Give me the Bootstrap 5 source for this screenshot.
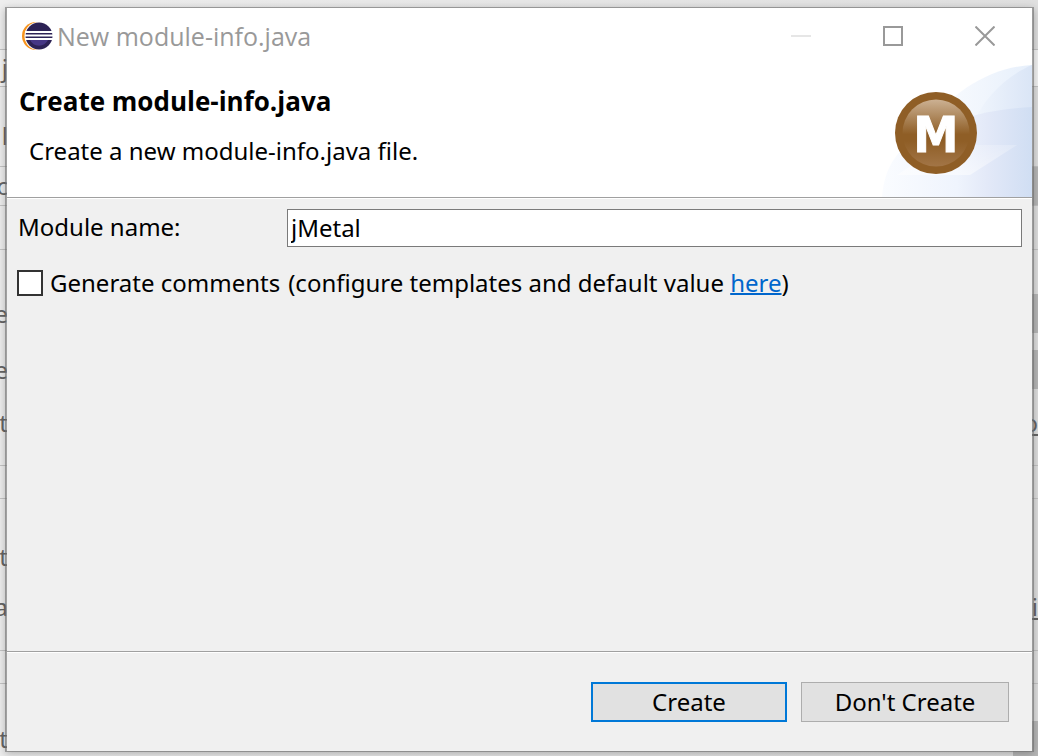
<!DOCTYPE html>
<html lang="en">
<head>
<meta charset="utf-8">
<meta name="viewport" content="width=device-width, initial-scale=1">
<title>New module-info.java</title>
<link href="https://cdn.jsdelivr.net/npm/bootstrap@5.3.0/dist/css/bootstrap.min.css" rel="stylesheet">
<style>
  body { font-family: "Noto Sans", "Open Sans", sans-serif; font-size: 24px; line-height: 32px; color: #000; background: #e1e1e1; }
  /* window behind the dialog */
  .backdrop-window { background: linear-gradient(90deg, #eee, #e0e0e0); }
  .strip { flex: none; line-height: 32px; color: #666; white-space: nowrap; overflow: hidden; }
  .h10 { height: 10px; } .h17 { height: 17px; } .h19 { height: 19px; } .h33 { height: 33px; } .h37 { height: 37px; }
  .h39 { height: 39px; } .h44 { height: 44px; } .h47 { height: 47px; } .h50 { height: 50px; } .h67 { height: 67px; }
  .ruled { border-bottom: 1px solid #c4c4c4; }
  .pale { background: #f4f4f4; }
  .bit-left { width: 8px; overflow: hidden; display: flex; justify-content: flex-end; }
  .bit-right { width: 6px; overflow: hidden; display: flex; justify-content: flex-end; text-decoration: underline; }
  .slab { width: 25px; background: #b8b8b8; }
  /* dialog */
  .dialog-window { inset: 7px 4px 4px 5px; border: 1px solid rgba(110,110,110,.6); border-width: 1px 2px; background: #f0f0f0; background-clip: padding-box; box-shadow: 0 2px 8px rgba(0,0,0,.25); }
  .titlebar { height: 57px; padding: 0 1px 2px 15px; color: #999; }
  .titlebar h1 { font-family: "Open Sans", "Noto Sans", sans-serif; font-size: 25px; line-height: 32px; font-weight: 400; }
  .cap-btn { width: 92px; height: 55px; border: 0; background: none; padding: 0; display: flex; align-items: center; justify-content: center; }
  .banner { height: 132px; }
  .banner-text { padding: 20px 0 0 12px; }
  .banner h2 { font-family: "Open Sans", "Noto Sans", sans-serif; font-size: 26px; line-height: 32px; font-weight: 700; }
  .banner p { margin: 18px 0 0 10px; }
  .groove { border-top: 1px solid #a0a0a0; box-shadow: inset 0 1px 0 #fff; }
  .form-area { padding: 11px 10px 0 11px; }
  .name-label { width: 269px; flex: none; line-height: 34px; padding-bottom: 2px; }
  .form-control.name-box { height: 38px; border: 1px solid #7a7a7a; border-radius: 0; padding: 0 3px 2px; font-size: 24px; color: #000; }
  .form-check-input.tick { width: 26px; height: 26px; border: 2px solid #333; border-radius: 0; margin: 0 7px 0 -1px; flex: none; }
  .link-here { color: #0066cc; text-decoration: underline; text-decoration-thickness: 2px; }
  .footer-area { padding: 30px 23px 29px 0; gap: 14px; }
  .btn.dlg { height: 40px; padding: 0; font-size: 24px; line-height: 32px; border: 1px solid #adadad; border-radius: 0; background: #e1e1e1; color: #000; width: 208px; }
  .btn.dlg-default { width: 196px; border: 2px solid #0078d7; }
</style>
</head>
<body>
<div class="backdrop-window position-relative vh-100 overflow-hidden d-flex flex-column">
  <div class="strip h50 ruled"></div>
  <div class="strip h37 ruled pale d-flex align-items-center"><span class="bit-left">j</span></div>
  <div class="strip h33"></div>
  <div class="strip h47 ruled d-flex"><span class="bit-left">l</span></div>
  <div class="strip h39 ruled d-flex align-items-center justify-content-between"><span class="bit-left">c</span><span class="slab h-100"></span></div>
  <div class="strip h44 ruled"></div>
  <div class="strip h44"></div>
  <div class="strip h39 d-flex align-items-center justify-content-between"><span class="bit-left">e</span><span class="slab h-100"></span></div>
  <div class="strip h17"></div>
  <div class="strip h39 d-flex align-items-center justify-content-between"><span class="bit-left">e</span><span class="slab h-100"></span></div>
  <div class="strip h67 d-flex align-items-center justify-content-between"><span class="bit-left">t</span><span class="bit-right">o</span></div>
  <div class="strip h10 ruled"></div>
  <div class="strip h33 ruled"></div>
  <div class="strip h33"></div>
  <div class="strip h50 d-flex align-items-center"><span class="bit-left">t</span></div>
  <div class="strip h50 d-flex align-items-center justify-content-between"><span class="bit-left">a</span><span class="bit-right">i</span></div>
  <div class="strip h19 ruled"></div>
  <div class="strip h33 ruled"></div>
  <div class="strip h37"></div>
  <div class="strip flex-fill d-flex align-items-center justify-content-between"><span class="bit-left">t</span><span class="slab h-100"></span></div>

  <main class="dialog-window position-absolute d-flex flex-column" role="dialog" aria-labelledby="dlg-title">
    <header class="titlebar bg-white d-flex align-items-center">
      <svg width="31" height="30" viewBox="0 0 31 30" aria-hidden="true">
        <circle cx="14" cy="15" r="14" fill="#f7941e"/>
        <circle cx="16.500" cy="15" r="14" fill="#fff"/>
        <circle cx="17" cy="15" r="13.500" fill="#2c2255"/>
        <path d="M8 19h18a10 10 0 0 1-18 0z" fill="#463785"/>
        <path d="M3 10h28v2H3zM3 13.500h28v2H3zM3 17h28v2H3z" fill="#fff"/>
      </svg>
      <h1 id="dlg-title" class="mb-0 ms-1 me-auto">New module-info.java</h1>
      <button type="button" class="cap-btn" aria-label="Minimize" disabled><svg width="20" height="20"><path d="M0 10h20" stroke="#e6e6e6" stroke-width="2"/></svg></button>
      <button type="button" class="cap-btn" aria-label="Maximize"><svg width="20" height="20"><path d="M1 1h18v18H1z" fill="none" stroke="#999" stroke-width="2"/></svg></button>
      <button type="button" class="cap-btn" aria-label="Close"><svg width="20" height="20"><path d="M.5.5l19 19m0-19l-19 19" stroke="#999" stroke-width="2"/></svg></button>
    </header>

    <section class="banner bg-white d-flex justify-content-between">
      <div class="banner-text">
        <h2 class="mb-0">Create module-info.java</h2>
        <p>Create a new module-info.java file.</p>
      </div>
      <svg class="flex-shrink-0" width="150" height="132" viewBox="0 0 150 132" aria-hidden="true">
        <defs>
          <linearGradient id="sky" gradientUnits="userSpaceOnUse" x1="50" x2="150" y1="0" y2="0"><stop offset="0" stop-color="#fafcff"/><stop offset=".5" stop-color="#f1f6fd"/><stop offset="1" stop-color="#e6effb"/></linearGradient>
          <linearGradient id="mid" x1="0" x2="1"><stop offset="0" stop-color="#f1f6fd"/><stop offset="1" stop-color="#dae5f6"/></linearGradient>
          <linearGradient id="deep" x1="0" x2="1"><stop offset="0" stop-color="#fafcff"/><stop offset=".5" stop-color="#eff4fd"/><stop offset=".7" stop-color="#e3e9f8"/><stop offset="1" stop-color="#d0def3"/></linearGradient>
          <linearGradient id="beam" x1="0" y1="1" x2="0" y2="0"><stop offset="0" stop-color="#fff" stop-opacity=".5"/><stop offset="1" stop-color="#fff" stop-opacity=".2"/></linearGradient>
          <linearGradient id="gloss" x1="0" y1="0" x2="0" y2="1"><stop offset="0" stop-color="#ccb193"/><stop offset=".52" stop-color="#8f5e26"/><stop offset=".62" stop-color="#8f5e26"/><stop offset="1" stop-color="#a27546"/></linearGradient>
        </defs>
        <path d="M40 70C68 24 112 2 150 0v80z" fill="url(#sky)"/>
        <path d="M91 58C103 32 124 11 150 0v80z" fill="url(#mid)"/>
        <path d="M0 132C2 106 12 91 25 80C58 56 105 44 150 42v90z" fill="url(#deep)"/>
        <path d="M15 110L60 80h75L88 110z" fill="url(#beam)"/>
        <circle cx="54" cy="68" r="41" fill="#8f5e26"/>
        <circle cx="54" cy="68" r="33.500" fill="url(#gloss)"/>
        <text x="54" y="87" text-anchor="middle" font-family="DejaVu Sans Condensed, DejaVu Sans" font-weight="700" font-size="50" fill="#fff" stroke="#fff" stroke-width="1">M</text>
      </svg>
    </section>

    <form class="flex-fill d-flex flex-column groove">
      <div class="form-area flex-fill">
        <div class="d-flex align-items-center">
          <label class="name-label" for="module-name">Module name:</label>
          <input class="form-control name-box" id="module-name" type="text" value="jMetal">
        </div>
        <div class="d-flex align-items-center mt-3 pt-1">
          <input class="form-check-input tick" id="gen-comments" type="checkbox">
          <label for="gen-comments">Generate comments</label>
          <span class="ms-2">(configure templates and default value <a class="link-here" href="#">here</a>)</span>
        </div>
      </div>
      <footer class="footer-area groove d-flex justify-content-end">
        <button type="submit" class="btn dlg dlg-default">Create</button>
        <button type="button" class="btn dlg">Don't Create</button>
      </footer>
    </form>
  </main>
</div>
</body>
</html>
